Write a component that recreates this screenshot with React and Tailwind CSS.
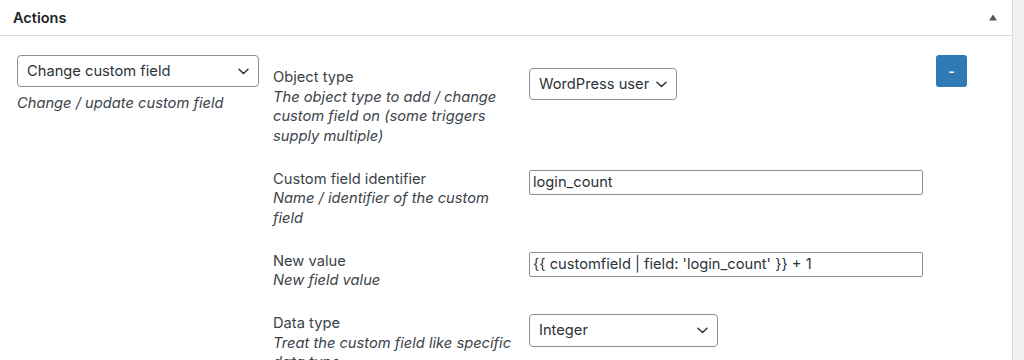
import React from "react";

const Chevron = () => (
  <svg width="11" height="7" viewBox="0 0 11 7" className="shrink-0">
    <polyline points="1,1.2 5.5,5.5 10,1.2" fill="none" stroke="#2c3338" strokeWidth="1.5" strokeLinecap="round" strokeLinejoin="round" />
  </svg>
);

const Select = ({ children, className }) => (
  <div className={"flex items-center justify-between gap-[5px] border border-[#8c8f94] rounded-[4px] bg-white pl-[9px] pr-[9px] text-[14.7px] text-[#2c3338] whitespace-nowrap " + className}>
    <span>{children}</span>
    <Chevron />
  </div>
);

const TextInput = ({ children }) => (
  <div className="flex items-center w-[394px] h-[25px] border border-[#8c8f94] rounded-[2px] bg-white pl-[3px] text-[14.7px] text-[#2c3338] whitespace-nowrap overflow-hidden">
    {children}
  </div>
);

const Label = ({ title, desc }) => (
  <div className="text-[14.7px] leading-[19.5px] text-[#3c434a]">
    <div>{title}</div>
    <div className="italic">{desc}</div>
  </div>
);

export default function App() {
  return (
    <div className="w-[1024px] h-[360px] bg-[#f0f0f1] overflow-hidden" style={{ fontFamily: "Inter, 'Noto Sans', sans-serif" }}>
      <div className="w-[1013px] h-full bg-white border-r border-[#dcdcde]">
        <div className="h-[36px] border-b border-[#dcdcde] flex items-center justify-between pl-[13px] pr-[15px]">
          <span className="text-[14.5px] font-semibold text-[#1d2327]">Actions</span>
          <svg width="8" height="7" viewBox="0 0 8 7">
            <polygon points="4,0.5 8,6.5 0,6.5" fill="#50575e" />
          </svg>
        </div>
        <div className="flex pl-[17px] pt-[19px]">
          <div className="w-[242px] shrink-0">
            <Select className="h-[32px] w-[242px]">Change custom field</Select>
            <div className="mt-[7px] text-[14.7px] leading-[19.5px] italic text-[#3c434a]">Change / update custom field</div>
          </div>
          <div className="ml-[14px] pt-[13px] w-[650px] shrink-0 grid grid-cols-[246px_394px] gap-x-[10px] gap-y-[23.5px] items-start">
            <Label title="Object type" desc="The object type to add / change custom field on (some triggers supply multiple)" />
            <Select className="h-[32px] w-[148px]">WordPress user</Select>
            <Label title="Custom field identifier" desc="Name / identifier of the custom field" />
            <TextInput>login_count</TextInput>
            <Label title="New value" desc="New field value" />
            <TextInput>{"{{ customfield | field: 'login_count' }} + 1"}</TextInput>
            <Label title="Data type" desc="Treat the custom field like specific data type" />
            <Select className="h-[33px] w-[189px]">Integer</Select>
          </div>
          <div className="ml-[13px]">
            <button className="w-[31px] h-[32px] rounded-[3px] bg-[#2f79b5] text-white text-[13px] font-bold leading-none flex items-center justify-center">-</button>
          </div>
        </div>
      </div>
    </div>
  );
}
